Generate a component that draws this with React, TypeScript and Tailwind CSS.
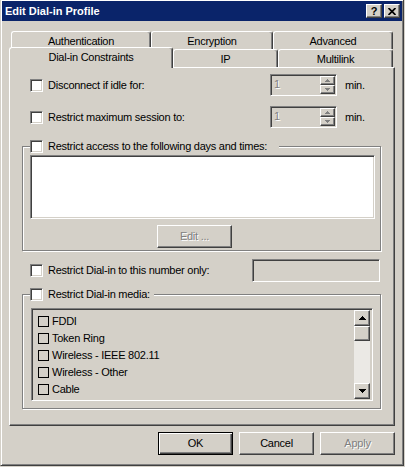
import React from 'react';

// classic 3D edges
const raised =
  'border border-t-white border-l-white border-r-[#404040] border-b-[#404040] shadow-[inset_-1px_-1px_0_#808080,inset_1px_1px_0_#d4d0c8]';
const sunken =
  'border border-t-[#808080] border-l-[#808080] border-r-white border-b-white shadow-[inset_1px_1px_0_#404040,inset_-1px_-1px_0_#d4d0c8]';
const etched = 'border border-[#808080] shadow-[inset_1px_1px_0_#fff,1px_1px_0_#fff]';
const disabledText = 'text-[#808080] [text-shadow:1px_1px_0_#fff]';

const CheckBox: React.FC = () => (
  <div className={`w-[13px] h-[13px] shrink-0 bg-white ${sunken}`} />
);

const Arrow: React.FC<{ up?: boolean; color?: string; w?: number }> = ({ up, color = '#000', w = 7 }) => {
  const h = Math.ceil(w / 2);
  return (
    <svg width={w} height={h} viewBox={`0 0 ${w} ${h}`} shapeRendering="crispEdges">
      {up ? (
        <polygon points={`${w / 2},0 ${w},${h} 0,${h}`} fill={color} />
      ) : (
        <polygon points={`0,0 ${w},0 ${w / 2},${h}`} fill={color} />
      )}
    </svg>
  );
};

const SpinBox: React.FC = () => (
  <div className={`w-[67px] h-[22px] bg-[#d4d0c8] flex ${sunken}`}>
    <div className={`flex-1 pl-[3px] pt-[2px] leading-[14px] ${disabledText}`}>1</div>
    <div className="w-[16px] flex flex-col pt-[1px] pr-[1px]">
      <div className={`h-[9px] flex items-center justify-center ${raised}`}>
        <Arrow up w={5} color="#808080" />
      </div>
      <div className={`h-[9px] flex items-center justify-center ${raised}`}>
        <Arrow w={5} color="#808080" />
      </div>
    </div>
  </div>
);

const Tab: React.FC<{ label: string; w: string; selected?: boolean }> = ({ label, w, selected }) => (
  <div
    className={`${w} ${
      selected ? 'h-[21px] -mb-[1px] relative z-10 pb-[2px]' : 'h-[18px] pt-[1px]'
    } shrink-0 bg-[#d4d0c8] border-l border-t border-r border-l-white border-t-white border-r-[#404040] rounded-t-[3px] shadow-[inset_-1px_0_0_#808080] flex items-center justify-center`}
  >
    {label}
  </div>
);

const mediaItems = ['FDDI', 'Token Ring', 'Wireless - IEEE 802.11', 'Wireless - Other', 'Cable'];

const App: React.FC = () => {
  return (
    <div className="w-[405px] h-[467px] bg-[#d4d0c8] overflow-hidden font-['Liberation_Sans',Arial,sans-serif] text-[11px] leading-[13px] tracking-[-0.25px] text-black select-none">
      <div
        className={`w-[404px] h-[467px] -mt-[1px] p-[1px] flex flex-col border border-t-[#d4d0c8] border-l-[#d4d0c8] border-r-[#404040] border-b-[#404040] shadow-[inset_1px_1px_0_#fff,inset_-1px_-1px_0_#808080]`}
      >
        {/* title bar */}
        <div className="h-[20px] shrink-0 bg-[#0a246a] flex items-center pl-[3px] pr-[2px]">
          <span className="flex-1 text-white font-bold text-[11px] tracking-normal">Edit Dial-in Profile</span>
          <div className={`w-[16px] h-[14px] flex items-center justify-center font-bold text-[11px] leading-[10px] ${raised} bg-[#d4d0c8]`}>
            ?
          </div>
          <div className={`w-[16px] h-[14px] ml-[2px] flex items-center justify-center ${raised} bg-[#d4d0c8]`}>
            <svg width="8" height="7" viewBox="0 0 8 7">
              <path d="M0.5 0 L7.5 7 M7.5 0 L0.5 7" stroke="#000" strokeWidth="1.7" />
            </svg>
          </div>
        </div>

        <div className="flex-1 px-[7px] pt-[10px]">
          {/* back row of tabs */}
          <div className="flex ml-[2px] h-[18px]">
            <Tab w="w-[140px]" label="Authentication" />
            <Tab w="w-[122px]" label="Encryption" />
            <Tab w="w-[120px]" label="Advanced" />
          </div>
          {/* front row of tabs */}
          <div className="flex h-[18px] items-end">
            <Tab w="w-[164px]" label="Dial-in Constraints" selected />
            <Tab w="w-[105px]" label="IP" />
            <Tab w="w-[115px]" label="Multilink" />
          </div>

          {/* page */}
          <div className="h-[359px] flex flex-col pt-[6px] border border-t-white border-l-white border-r-[#404040] border-b-[#404040] shadow-[inset_-1px_-1px_0_#808080]">
            <div className="h-[22px] flex items-center">
              <div className="w-[260px] pl-[20px] flex items-center">
                <CheckBox />
                <span className="ml-[5px]">Disconnect if idle for:</span>
              </div>
              <SpinBox />
              <span className="ml-[8px]">min.</span>
            </div>
            <div className="h-[22px] mt-[10px] flex items-center">
              <div className="w-[260px] pl-[20px] flex items-center">
                <CheckBox />
                <span className="ml-[5px]">Restrict maximum session to:</span>
              </div>
              <SpinBox />
              <span className="ml-[8px]">min.</span>
            </div>

            {/* days and times group */}
            <div className={`mt-[18px] ml-[12px] w-[359px] h-[105px] shrink-0 ${etched}`}>
              <div className="-mt-[7px] ml-[7px] w-fit h-[13px] pr-[12px] flex items-center bg-[#d4d0c8]">
                <CheckBox />
                <span className="ml-[5px]">Restrict access to the following days and times:</span>
              </div>
              <div className={`mt-[2px] ml-[7px] w-[345px] h-[64px] bg-white ${sunken}`} />
              <div className={`mt-[6px] ml-[134px] w-[75px] h-[23px] flex items-center justify-center ${raised} ${disabledText}`}>
                Edit ...
              </div>
            </div>

            <div className="h-[23px] mt-[8px] flex items-center">
              <div className="w-[242px] pl-[20px] flex items-center">
                <CheckBox />
                <span className="ml-[5px]">Restrict Dial-in to this number only:</span>
              </div>
              <div className={`w-[128px] h-[23px] bg-[#d4d0c8] ${sunken}`} />
            </div>

            {/* media group */}
            <div className={`mt-[12px] ml-[12px] w-[359px] h-[115px] shrink-0 ${etched}`}>
              <div className="-mt-[7px] ml-[7px] w-fit h-[13px] pr-[4px] flex items-center bg-[#d4d0c8]">
                <CheckBox />
                <span className="ml-[5px]">Restrict Dial-in media:</span>
              </div>
              <div className={`mt-[7px] ml-[8px] w-[342px] h-[93px] bg-[#d4d0c8] flex ${sunken}`}>
                <div className="flex-1 pt-[4px] pl-[6px]">
                  {mediaItems.map((item) => (
                    <div key={item} className="h-[17px] flex items-center">
                      <div className="w-[11px] h-[11px] border border-black shrink-0" />
                      <span className="ml-[3px]">{item}</span>
                    </div>
                  ))}
                </div>
                <div className="w-[16px] flex flex-col pt-[1px] pb-[1px] mr-[2px]">
                  <div className={`h-[16px] shrink-0 flex items-center justify-center bg-[#d4d0c8] ${raised}`}>
                    <Arrow up />
                  </div>
                  <div className={`h-[15px] shrink-0 bg-[#d4d0c8] ${raised}`} />
                  <div className="flex-1 bg-[#ebe9e5]" />
                  <div className={`h-[16px] shrink-0 flex items-center justify-center bg-[#d4d0c8] ${raised}`}>
                    <Arrow />
                  </div>
                </div>
              </div>
            </div>
          </div>

          {/* dialog buttons */}
          <div className="mt-[6px] flex justify-end gap-[6px]">
            <div className="w-[75px] h-[23px] flex items-center justify-center border border-black shadow-[inset_1px_1px_0_#fff,inset_-1px_-1px_0_#404040,inset_-2px_-2px_0_#808080]">
              OK
            </div>
            <div className={`w-[75px] h-[23px] flex items-center justify-center ${raised}`}>Cancel</div>
            <div className={`w-[75px] h-[23px] flex items-center justify-center ${raised} ${disabledText}`}>Apply</div>
          </div>
        </div>
      </div>
    </div>
  );
};

export default App;
